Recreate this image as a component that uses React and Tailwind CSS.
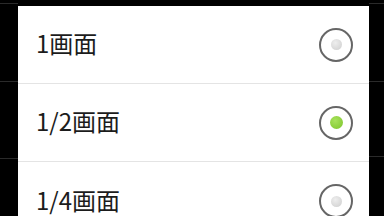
const ROWS = [
  { label: "1画面", checked: false },
  { label: "1/2画面", checked: true },
  { label: "1/4画面", checked: false },
];

function Radio({ checked }) {
  return (
    <div className="w-[34px] h-[34px] rounded-full border-2 border-[#666666] flex items-center justify-center bg-white">
      {checked ? (
        <div className="w-[13px] h-[13px] rounded-full bg-[radial-gradient(circle_at_40%_35%,#a8e25c,#7cc42a)]" />
      ) : (
        <div className="w-[11px] h-[11px] rounded-full bg-[radial-gradient(circle_at_40%_35%,#eeeeee,#cdcdcd)]" />
      )}
    </div>
  );
}

export default function App() {
  return (
    <div className="w-[384px] h-[216px] bg-black flex overflow-hidden font-['Noto_Sans_CJK_JP','Noto_Sans',sans-serif]">
      <div className="w-[18px] shrink-0 flex flex-col pt-[3px]">
        <div className="h-px bg-[#2a2a2a]" />
        <div className="h-px bg-[#2a2a2a] mt-[77px]" />
        <div className="h-px bg-[#2a2a2a] mt-[76px]" />
      </div>
      <div className="w-[351px] shrink-0 flex flex-col pt-[6px]">
        <div className="bg-white flex-1 flex flex-col">
          {ROWS.map((r, i) => (
            <div
              key={r.label}
              className={`h-[78px] shrink-0 flex items-center justify-between pl-[18px] pr-[16px] ${i < ROWS.length - 1 ? "border-b border-[#e4e4e4]" : ""}`}
            >
              <span className="text-[24px] leading-none text-[#1c1c1c] -mt-[3px]">{r.label}</span>
              <Radio checked={r.checked} />
            </div>
          ))}
        </div>
      </div>
      <div className="flex-1 flex flex-col pt-[3px]">
        <div className="h-px bg-[#2a2a2a]" />
        <div className="h-px bg-[#2a2a2a] mt-[77px]" />
        <div className="h-px bg-[#2a2a2a] mt-[74px]" />
      </div>
    </div>
  );
}
